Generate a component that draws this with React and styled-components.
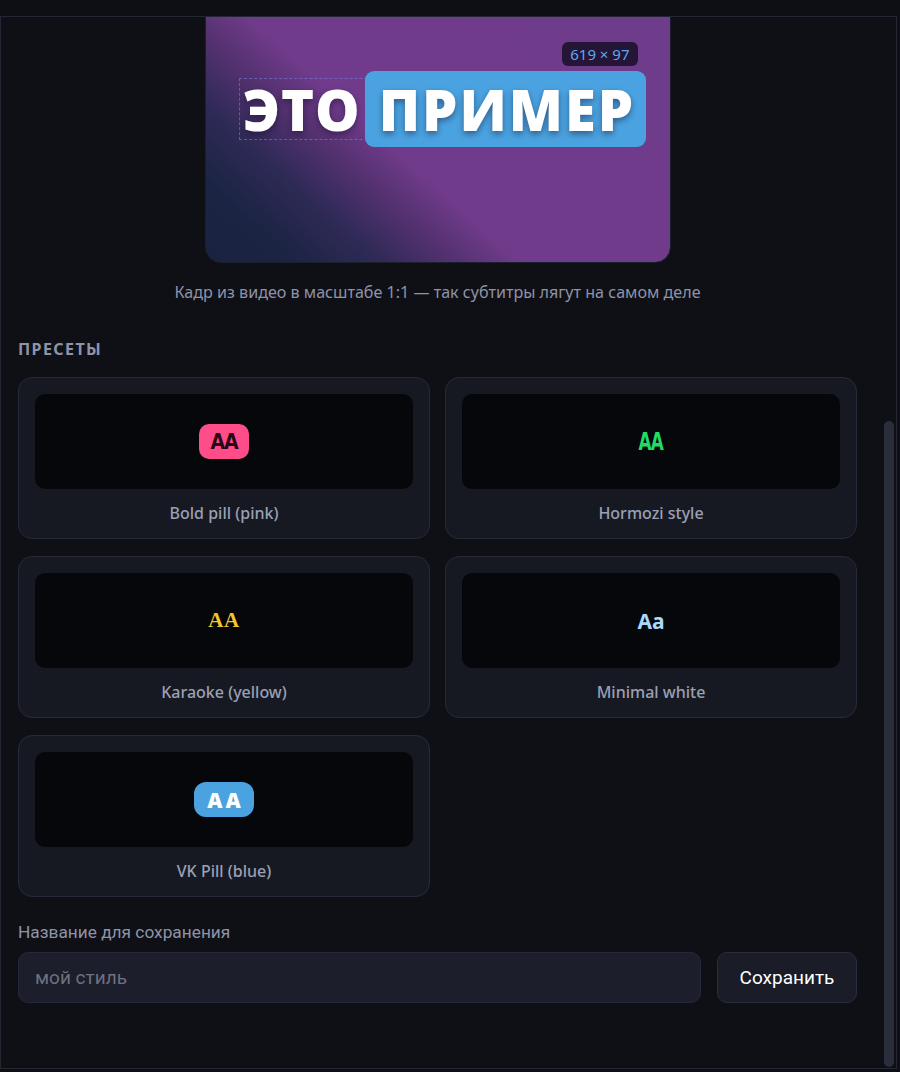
import React, { useLayoutEffect, useRef } from 'react';
import styled, { createGlobalStyle } from 'styled-components';

const GlobalStyle = createGlobalStyle`
  html, body {
    margin: 0;
    padding: 0;
    background: #0d0f14;
    font-family: 'Noto Sans', 'Open Sans', sans-serif;
  }
  * {
    box-sizing: border-box;
  }
`;

const Page = styled.div`
  height: 1072px;
  padding-top: 16px;
  overflow: hidden;
`;

const Panel = styled.div`
  position: relative;
  width: 897px;
  height: 1053px;
  background: #0e1016;
  border: 1px solid #232633;
`;

const ScrollArea = styled.div`
  height: 100%;
  overflow-y: auto;
  padding: 0 39px 65px 17px;
  scrollbar-width: none;

  &::-webkit-scrollbar {
    display: none;
  }
`;

const ScrollThumb = styled.div`
  position: absolute;
  top: 404px;
  right: 2px;
  bottom: 1px;
  width: 10px;
  border-radius: 5px;
  background: #2a2d3c;
`;

const Frame = styled.div`
  position: relative;
  width: 466px;
  height: 262px;
  margin: 0 auto;
  border-radius: 16px;
  border: 1px solid #1c1f2c;
  overflow: hidden;
  background: linear-gradient(
    222deg,
    #6f3b8b 0%,
    #713b8c 58%,
    #53316f 67%,
    #2e2a56 77%,
    #1c2444 88%,
    #1a2240 100%
  );
`;

const SizeBadge = styled.div`
  position: absolute;
  top: 40px;
  right: 32px;
  height: 24px;
  padding: 0 8px;
  border-radius: 6px;
  background: rgba(26, 16, 42, 0.88);
  color: #5ea8f0;
  font-size: 15px;
  line-height: 24px;
`;

const SubtitleBox = styled.div`
  position: absolute;
  top: 76px;
  left: 33px;
  width: 400px;
  height: 62px;
  display: flex;
  align-items: center;
  padding-left: 3px;
  border: 1px dashed rgba(120, 132, 235, 0.55);
`;

const Word = styled.span`
  font-family: 'Open Sans', 'Noto Sans', sans-serif;
  font-weight: 800;
  font-size: 56px;
  line-height: 60px;
  color: #ffffff;
  text-shadow: 0 3px 6px rgba(20, 10, 40, 0.45);
  letter-spacing: ${(p) => p.$spacing || 0}px;
  white-space: nowrap;
`;

const HighlightWord = styled(Word)`
  position: relative;
  z-index: 1;
  margin: -8px 0 -8px 4px;
  padding: 8px 11px 8px 14px;
  border-radius: 9px;
  background: #4aa3e0;
`;

const Caption = styled.div`
  margin-top: 18px;
  text-align: center;
  color: #8e93a8;
  font-size: 16.1px;
  line-height: 22px;
`;

const SectionTitle = styled.div`
  margin-top: 36px;
  color: #8e93a8;
  font-size: 16px;
  font-weight: 700;
  letter-spacing: 1.4px;
  line-height: 20px;
`;

const PresetGrid = styled.div`
  margin-top: 18px;
  display: grid;
  grid-template-columns: 1fr 1fr;
  column-gap: 15px;
  row-gap: 17px;
`;

const PresetCard = styled.button`
  height: 162px;
  padding: 16px 16px 0;
  display: flex;
  flex-direction: column;
  border: 1px solid #262a38;
  border-radius: 14px;
  background: #171922;
  cursor: pointer;
  font-family: inherit;
`;

const PresetPreview = styled.div`
  height: 95px;
  display: flex;
  align-items: center;
  justify-content: center;
  border-radius: 10px;
  background: #06070b;
`;

const PresetName = styled.div`
  margin-top: 13px;
  text-align: center;
  color: #9aa0b5;
  font-size: 16px;
  font-weight: 500;
  line-height: 22px;
`;

const PinkPill = styled.span`
  height: 35px;
  padding: 0 11px;
  display: flex;
  align-items: center;
  border-radius: 10px;
  background: #ff4d8a;
  color: #2b0616;
  font-family: 'DejaVu Sans Condensed', 'DejaVu Sans', sans-serif;
  font-weight: 700;
  font-size: 21px;
  letter-spacing: -1px;
`;

const HormoziText = styled.span`
  display: inline-block;
  color: #1fdc66;
  font-family: 'DejaVu Sans Condensed', 'DejaVu Sans', sans-serif;
  font-weight: 700;
  font-size: 24px;
  letter-spacing: -1px;
  transform: scaleX(0.78);
`;

const KaraokeText = styled.span`
  color: #f0c62c;
  font-family: 'Liberation Serif', serif;
  font-weight: 700;
  font-size: 21px;
  letter-spacing: 0.5px;
  text-shadow: 0 1px 2px rgba(0, 0, 0, 0.9);
`;

const MinimalText = styled.span`
  color: #a7d8f8;
  font-family: 'Noto Sans', sans-serif;
  font-weight: 700;
  font-size: 21px;
`;

const BluePill = styled.span`
  height: 35px;
  padding: 0 10px 0 13px;
  display: flex;
  align-items: center;
  border-radius: 12px;
  background: #4aa3e0;
  color: #ffffff;
  font-family: 'Open Sans', sans-serif;
  font-weight: 800;
  font-size: 21px;
  letter-spacing: 3px;
`;

const FieldLabel = styled.div`
  margin-top: 24px;
  color: #8e93a8;
  font-family: Roboto, sans-serif;
  font-size: 17.3px;
  line-height: 22px;
`;

const FieldRow = styled.div`
  margin-top: 9px;
  display: flex;
  gap: 16px;
`;

const NameInput = styled.input`
  flex: 1;
  height: 51px;
  padding: 0 16px;
  border: 1px solid #252838;
  border-radius: 10px;
  background: #1c1e2b;
  color: #e6e8ef;
  font-family: Roboto, sans-serif;
  font-size: 19px;
  outline: none;

  &::placeholder {
    color: #6e717f;
  }
`;

const SaveButton = styled.button`
  width: 140px;
  height: 51px;
  border: 1px solid #2a2d3b;
  border-radius: 10px;
  background: #1a1c27;
  color: #ffffff;
  font-family: Roboto, sans-serif;
  font-size: 19px;
  cursor: pointer;
`;

const presets = [
  { name: 'Bold pill (pink)', sample: <PinkPill>AA</PinkPill> },
  { name: 'Hormozi style', sample: <HormoziText>AA</HormoziText> },
  { name: 'Karaoke (yellow)', sample: <KaraokeText>AA</KaraokeText> },
  { name: 'Minimal white', sample: <MinimalText>Aa</MinimalText> },
  { name: 'VK Pill (blue)', sample: <BluePill>AA</BluePill> },
];

export default function App() {
  const scrollRef = useRef(null);

  useLayoutEffect(() => {
    const el = scrollRef.current;
    if (el) el.scrollTop = el.scrollHeight;
  }, []);

  return (
    <>
      <GlobalStyle />
      <Page>
        <Panel>
          <ScrollArea ref={scrollRef}>
            <Frame>
              <SizeBadge>619 × 97</SizeBadge>
              <SubtitleBox>
                <Word $spacing={1}>ЭТО</Word>
                <HighlightWord $spacing={2}>ПРИМЕР</HighlightWord>
              </SubtitleBox>
            </Frame>
            <Caption>Кадр из видео в масштабе 1:1 — так субтитры лягут на самом деле</Caption>

            <SectionTitle>ПРЕСЕТЫ</SectionTitle>
            <PresetGrid>
              {presets.map((p) => (
                <PresetCard key={p.name}>
                  <PresetPreview>{p.sample}</PresetPreview>
                  <PresetName>{p.name}</PresetName>
                </PresetCard>
              ))}
            </PresetGrid>

            <FieldLabel>Название для сохранения</FieldLabel>
            <FieldRow>
              <NameInput placeholder="мой стиль" />
              <SaveButton>Сохранить</SaveButton>
            </FieldRow>
          </ScrollArea>
          <ScrollThumb />
        </Panel>
      </Page>
    </>
  );
}
